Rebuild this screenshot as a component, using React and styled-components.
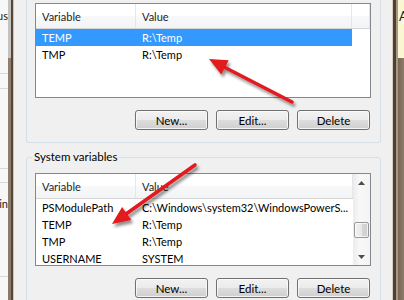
import React from "react";
import styled, { createGlobalStyle } from "styled-components";

const Global = createGlobalStyle`
  html, body { margin: 0; padding: 0; background: #f0f0f0; overflow: hidden; }
  #root { width: 404px; height: 300px; }
`;

const Screen = styled.div`
  position: relative;
  display: flex;
  width: 404px;
  height: 300px;
  overflow: hidden;
  font-family: "Segoe UI", Lato, "Open Sans", sans-serif;
  font-size: 11px;
  color: #000;
`;

/* ---------- background window on the left ---------- */
const BackWindow = styled.div`
  flex: none;
  width: 8px;
  background: #f7f7f7;
  display: flex;
  flex-direction: column;
  overflow: hidden;
`;

const BackRow = styled.div`
  flex: none;
  height: ${(p) => p.$h}px;
  border-bottom: 1px solid #d9d9d9;
  display: flex;
  justify-content: flex-end;
  align-items: flex-start;
  padding-top: ${(p) => p.$pt || 0}px;
  box-sizing: border-box;
  white-space: nowrap;
  font-size: 11px;
  color: #222;
`;

const BackScroll = styled.div`
  flex: none;
  width: 3px;
  background: linear-gradient(to bottom, #c4c2bf 0, #c4c2bf 58px, #8e7e6e 58px, #8a7a6a 100%);
`;

const Frame = styled.div`
  flex: none;
  width: ${(p) => p.$w}px;
  background: ${(p) => p.$c};
`;

/* ---------- dialog ---------- */
const Dialog = styled.div`
  flex: none;
  width: 378px;
  box-sizing: border-box;
  padding: 0 11px 0 12px;
  background: #f0f0f0;
  display: flex;
  flex-direction: column;
`;

const Group = styled.fieldset`
  margin: ${(p) => (p.$cropped ? "0" : "6px 0 0")};
  padding: ${(p) => (p.$cropped ? "3px" : "8px")} 9px 12px 8px;
  border: 1px solid #d5dfe5;
  border-top: ${(p) => (p.$cropped ? "none" : "1px solid #d5dfe5")};
  border-radius: ${(p) => (p.$cropped ? "0 0 3px 3px" : "3px")};
  min-width: 0;
  display: flex;
  flex-direction: column;
`;

const Legend = styled.legend`
  margin-left: -3px;
  padding: 0 2px;
  line-height: 16px;
  font-size: 11.5px;
  color: #000;
`;

const ListBox = styled.div`
  height: ${(p) => p.$h}px;
  box-sizing: border-box;
  border: 1px solid #828790;
  background: #fff;
  display: flex;
  overflow: hidden;
`;

const ListMain = styled.div`
  flex: 1;
  display: flex;
  flex-direction: column;
  min-width: 0;
`;

const Header = styled.div`
  flex: none;
  height: 24px;
  display: flex;
  border-bottom: 1px solid #d5d5d5;
  background: linear-gradient(to bottom, #ffffff 0%, #ffffff 50%, #f7f8f9 50%, #f3f4f6 100%);
`;

const HeadCell = styled.div`
  flex: ${(p) => (p.$w ? "none" : "1")};
  width: ${(p) => (p.$w ? `${p.$w}px` : "auto")};
  box-sizing: border-box;
  padding-left: 6px;
  display: flex;
  align-items: center;
  border-right: 1px solid #e3e6ea;
  color: #1e1e1e;
  white-space: nowrap;
  overflow: hidden;
`;

const Row = styled.div`
  flex: none;
  height: 17px;
  display: flex;
  align-items: center;
  background: ${(p) => (p.$selected ? "#3399ff" : "transparent")};
  color: ${(p) => (p.$selected ? "#fff" : "#000")};
  width: ${(p) => (p.$w ? `${p.$w}px` : "auto")};
`;

const Cell = styled.div`
  flex: ${(p) => (p.$w ? "none" : "1")};
  width: ${(p) => (p.$w ? `${p.$w}px` : "auto")};
  box-sizing: border-box;
  padding-left: 6px;
  white-space: nowrap;
  overflow: hidden;
`;

const ScrollBar = styled.div`
  flex: none;
  width: 17px;
  background: linear-gradient(to right, #ececec, #f8f8f8 40%, #f4f4f4);
  display: flex;
  flex-direction: column;
  align-items: center;
`;

const ArrowBtn = styled.div`
  flex: none;
  height: 17px;
  width: 17px;
  display: flex;
  align-items: center;
  justify-content: center;
`;

const Track = styled.div`
  flex: 1;
  width: 17px;
  display: flex;
  flex-direction: column;
  align-items: center;
  padding-top: ${(p) => p.$offset}px;
  box-sizing: border-box;
`;

const Thumb = styled.div`
  width: 15px;
  height: 16px;
  box-sizing: border-box;
  border: 1px solid #979797;
  border-radius: 2px;
  background: linear-gradient(to right, #f3f3f3 0%, #e8e8e8 50%, #d6d6d6 51%, #cfcfcf 100%);
  box-shadow: inset 0 0 0 1px rgba(255, 255, 255, 0.7);
`;

const ButtonRow = styled.div`
  display: flex;
  justify-content: flex-end;
  gap: 8px;
  margin-top: 12px;
  padding-right: 1px;
`;

const Button = styled.div`
  width: 73px;
  height: 20px;
  box-sizing: border-box;
  border: 1px solid #707070;
  border-radius: 3px;
  background: linear-gradient(to bottom, #f2f2f2 0%, #ebebeb 50%, #dddddd 51%, #cfcfcf 100%);
  box-shadow: inset 0 0 0 1px rgba(252, 252, 252, 0.8);
  display: flex;
  align-items: center;
  justify-content: center;
  font-size: 11.5px;
  color: #000;
`;

/* ---------- background on the right ---------- */
const RightBack = styled.div`
  flex: 1;
  display: flex;
  flex-direction: column;
  overflow: hidden;
`;

const Note = styled.div`
  flex: none;
  height: 58px;
  background: #fbf6d2;
  padding-left: 1px;
  padding-top: 8px;
  box-sizing: border-box;
  font-size: 13px;
  color: #222;
  white-space: nowrap;
`;

const Wood = styled.div`
  flex: 1;
  background: linear-gradient(to right, #7a6856, #8d7c6a);
`;

const Overlay = styled.svg`
  position: absolute;
  left: 0;
  top: 0;
  pointer-events: none;
`;

function RedArrow({ tail, tip, base, c1, c2 }) {
  return (
    <g>
      <line x1={tail[0]} y1={tail[1]} x2={base[0]} y2={base[1]} stroke="#e21a1f" strokeWidth="3.6" strokeLinecap="round" />
      <polygon points={`${tip[0]},${tip[1]} ${c1[0]},${c1[1]} ${c2[0]},${c2[1]}`} fill="#e21a1f" />
    </g>
  );
}

const userVars = [
  { name: "TEMP", value: "R:\\Temp", selected: true },
  { name: "TMP", value: "R:\\Temp" },
];

const sysVars = [
  { name: "PSModulePath", value: "C:\\Windows\\system32\\WindowsPowerS..." },
  { name: "TEMP", value: "R:\\Temp" },
  { name: "TMP", value: "R:\\Temp" },
  { name: "USERNAME", value: "SYSTEM" },
];

function Buttons() {
  return (
    <ButtonRow>
      <Button>New...</Button>
      <Button>Edit...</Button>
      <Button>Delete</Button>
    </ButtonRow>
  );
}

export default function App() {
  return (
    <>
      <Global />
      <Screen>
        <BackWindow>
          <BackRow $h={74} $pt={9}>us</BackRow>
          <BackRow $h={15} />
          <BackRow $h={80} />
          <BackRow $h={14} />
          <BackRow $h={94} $pt={14}>in</BackRow>
          <BackRow $h={40} />
        </BackWindow>
        <BackScroll />
        <Frame $w={2} $c="#574637" />
        <Frame $w={1} $c="#cfc6ba" />

        <Dialog>
          <Group $cropped>
            <ListBox $h={95}>
              <ListMain>
                <Header>
                  <HeadCell $w={100}>Variable</HeadCell>
                  <HeadCell $w={216}>Value</HeadCell>
                  <HeadCell />
                </Header>
                {userVars.map((v) => (
                  <Row key={v.name} $selected={v.selected} $w={316}>
                    <Cell $w={100}>{v.name}</Cell>
                    <Cell>{v.value}</Cell>
                  </Row>
                ))}
              </ListMain>
            </ListBox>
            <Buttons />
          </Group>

          <Group>
            <Legend>System variables</Legend>
            <ListBox $h={93}>
              <ListMain>
                <Header>
                  <HeadCell $w={100}>Variable</HeadCell>
                  <HeadCell>Value</HeadCell>
                </Header>
                {sysVars.map((v) => (
                  <Row key={v.name}>
                    <Cell $w={100}>{v.name}</Cell>
                    <Cell>{v.value}</Cell>
                  </Row>
                ))}
              </ListMain>
              <ScrollBar>
                <ArrowBtn>
                  <svg width="7" height="4" viewBox="0 0 7 4"><polygon points="3.5,0 7,4 0,4" fill="#4d4d4d" /></svg>
                </ArrowBtn>
                <Track $offset={31}>
                  <Thumb />
                </Track>
                <ArrowBtn>
                  <svg width="7" height="4" viewBox="0 0 7 4"><polygon points="0,0 7,0 3.5,4" fill="#4d4d4d" /></svg>
                </ArrowBtn>
              </ScrollBar>
            </ListBox>
            <Buttons />
          </Group>
        </Dialog>

        <Frame $w={1} $c="#d8cfc3" />
        <Frame $w={3} $c="#4f4034" />
        <Frame $w={2} $c="#a89886" />
        <RightBack>
          <Note>A</Note>
          <Wood />
        </RightBack>

        <Overlay width="404" height="300" viewBox="0 0 404 300">
          <defs>
            <filter id="shadow" x="-20%" y="-20%" width="140%" height="140%">
              <feGaussianBlur in="SourceAlpha" stdDeviation="1.6" />
              <feOffset dx="2" dy="3" result="b" />
              <feComponentTransfer><feFuncA type="linear" slope="0.45" /></feComponentTransfer>
              <feMerge>
                <feMergeNode />
                <feMergeNode in="SourceGraphic" />
              </feMerge>
            </filter>
          </defs>
          <g filter="url(#shadow)">
            <RedArrow tail={[292, 102]} tip={[209, 59]} base={[224, 67]} c1={[228.7, 60.2]} c2={[221.3, 74.4]} />
            <RedArrow tail={[195, 165]} tip={[112, 224]} base={[126, 214]} c1={[131.3, 220.1]} c2={[122.1, 207.1]} />
          </g>
        </Overlay>
      </Screen>
    </>
  );
}
